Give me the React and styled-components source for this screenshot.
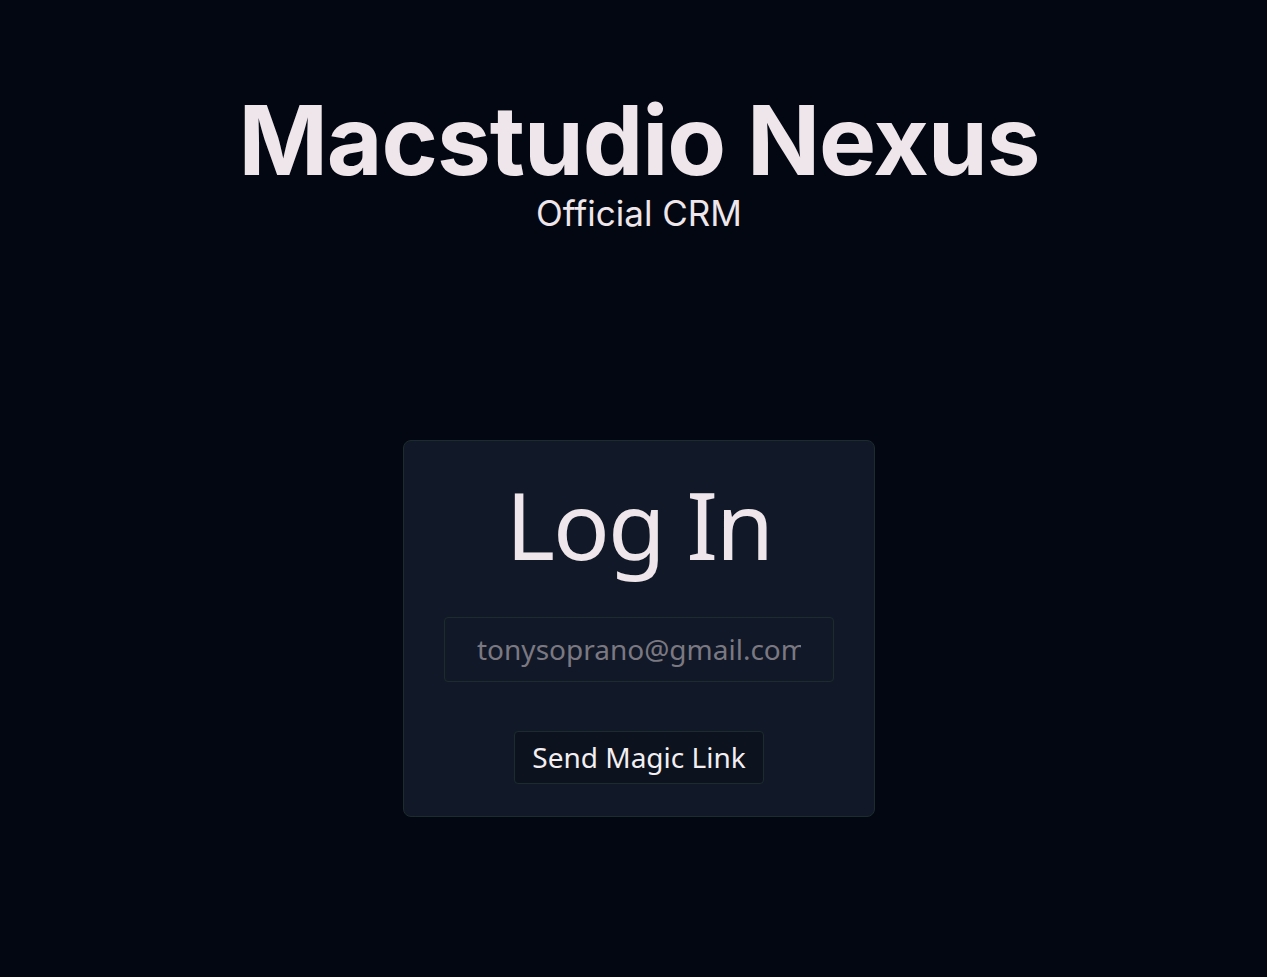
import styled, { createGlobalStyle } from "styled-components";

const GlobalStyle = createGlobalStyle`
  html, body {
    margin: 0;
    padding: 0;
    background: #030712;
  }
  * {
    box-sizing: border-box;
  }
`;

const Page = styled.div`
  min-height: 100vh;
  padding-left: 11px;
  display: flex;
  flex-direction: column;
  align-items: center;
  color: #eee6ea;
`;

const Header = styled.header`
  display: flex;
  flex-direction: column;
  align-items: center;
  padding-top: 97px;
`;

const Title = styled.h1`
  margin: 0;
  font-family: Inter, "Liberation Sans", sans-serif;
  font-weight: 700;
  font-size: 96px;
  line-height: 0.9;
  letter-spacing: -1px;
`;

const Subtitle = styled.p`
  margin: 13px 0 0;
  font-family: Inter, "Liberation Sans", sans-serif;
  font-size: 35px;
  line-height: 1;
  font-weight: 400;
`;

const Card = styled.main`
  margin-top: 209px;
  width: 472px;
  padding: 32px 40px 32px;
  display: flex;
  flex-direction: column;
  align-items: center;
  background: #111827;
  border: 1px solid #1c2b2e;
  border-radius: 8px;
`;

const Heading = styled.h2`
  margin: 0;
  font-family: "Noto Sans", "Open Sans", sans-serif;
  font-weight: 400;
  font-size: 94px;
  line-height: 1.1;
  letter-spacing: -2px;
`;

const EmailInput = styled.input`
  margin-top: 40px;
  width: 100%;
  height: 65px;
  padding: 0 32px;
  background: #111827;
  border: 1px solid #1c2b2e;
  border-radius: 4px;
  color: #eee6ea;
  font-family: "Noto Sans", "Open Sans", sans-serif;
  font-size: 28px;
  outline: none;

  &::placeholder {
    color: #7b7882;
  }
`;

const SendButton = styled.button`
  margin-top: 49px;
  height: 53px;
  padding: 0 17px;
  background: #0c121e;
  border: 1px solid #1c2b2e;
  border-radius: 4px;
  color: #f3eef2;
  font-family: "Noto Sans", "Open Sans", sans-serif;
  font-size: 28px;
  cursor: pointer;
`;

export default function App() {
  return (
    <Page>
      <GlobalStyle />
      <Header>
        <Title>Macstudio Nexus</Title>
        <Subtitle>Official CRM</Subtitle>
      </Header>
      <Card>
        <Heading>Log In</Heading>
        <EmailInput type="email" placeholder="tonysoprano@gmail.com" />
        <SendButton>Send Magic Link</SendButton>
      </Card>
    </Page>
  );
}
